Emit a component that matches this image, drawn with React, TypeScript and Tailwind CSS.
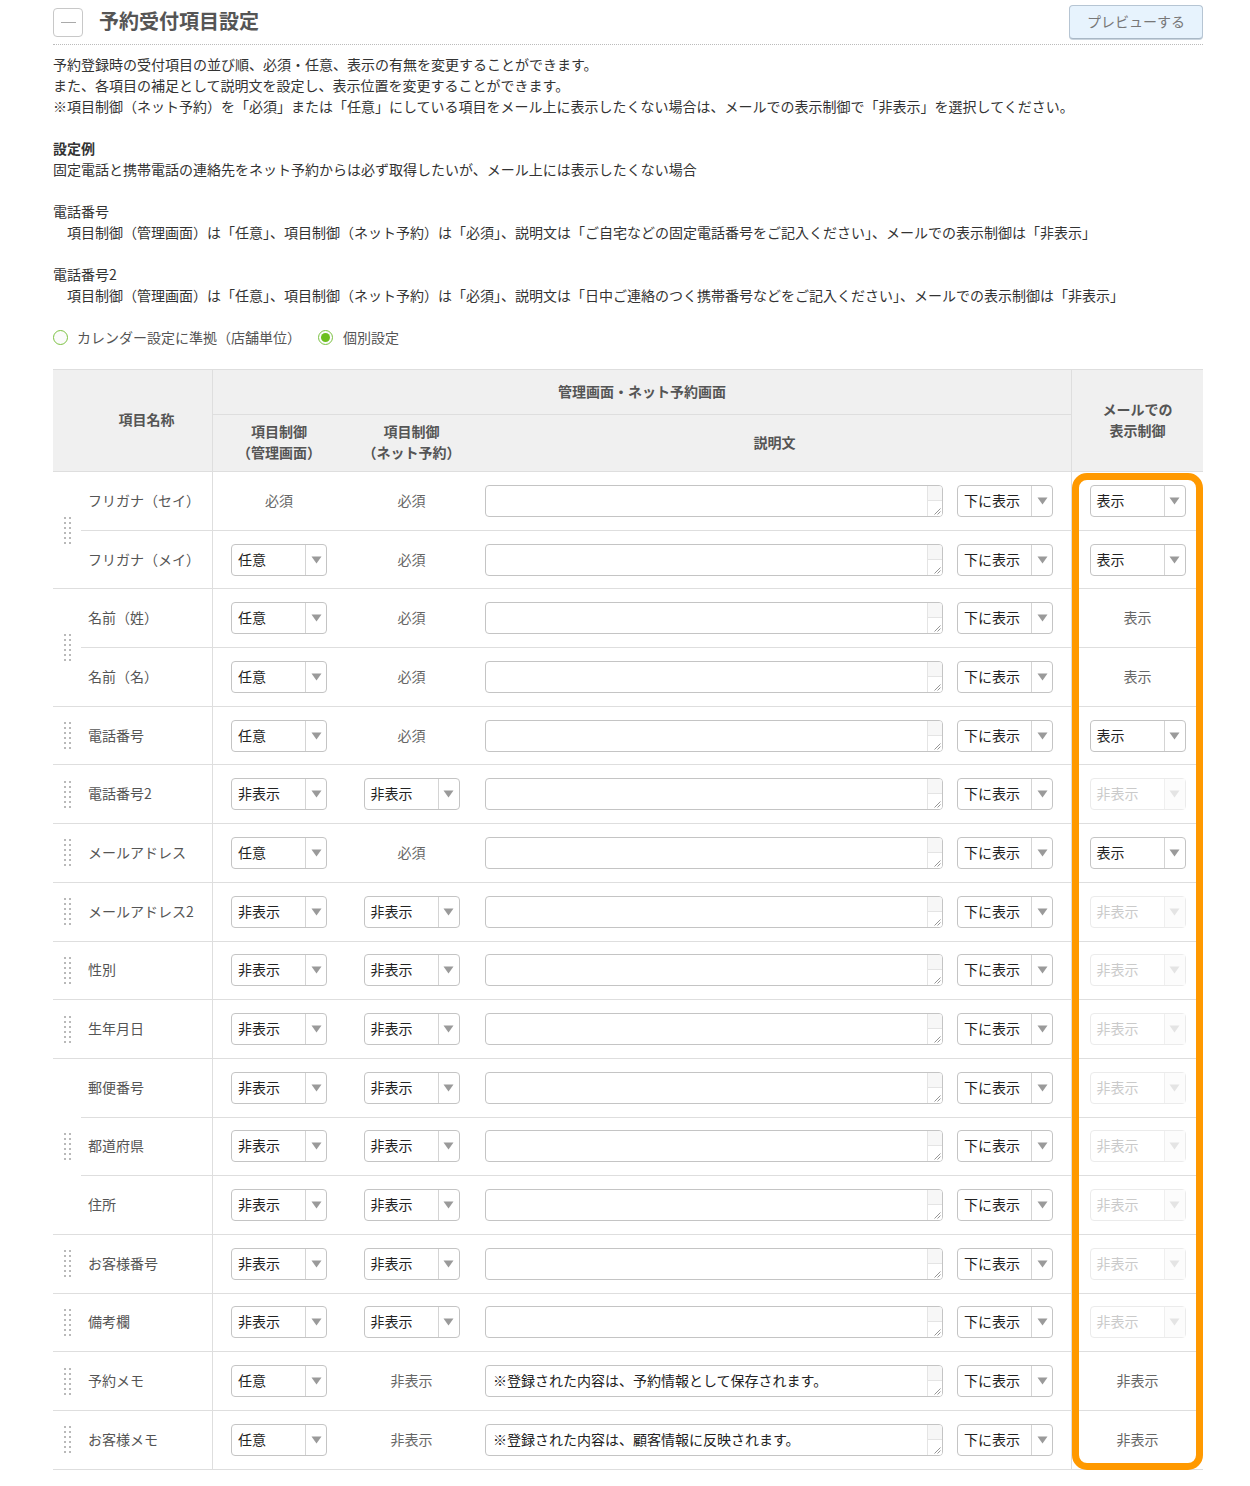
import React from "react";

type C = { t: "txt" | "sel" | "dis"; v: string };

type RowSpec = {
  name: string;
  admin: C;
  net: C;
  desc: string;
  mail: C;
};

const s = (v: string): C => ({ t: "sel", v });
const x = (v: string): C => ({ t: "txt", v });
const d = (v: string): C => ({ t: "dis", v });

const hidden = (name: string): RowSpec => ({
  name,
  admin: s("非表示"),
  net: s("非表示"),
  desc: "",
  mail: d("非表示"),
});

const groups: RowSpec[][] = [
  [
    { name: "フリガナ（セイ）", admin: x("必須"), net: x("必須"), desc: "", mail: s("表示") },
    { name: "フリガナ（メイ）", admin: s("任意"), net: x("必須"), desc: "", mail: s("表示") },
  ],
  [
    { name: "名前（姓）", admin: s("任意"), net: x("必須"), desc: "", mail: x("表示") },
    { name: "名前（名）", admin: s("任意"), net: x("必須"), desc: "", mail: x("表示") },
  ],
  [{ name: "電話番号", admin: s("任意"), net: x("必須"), desc: "", mail: s("表示") }],
  [hidden("電話番号2")],
  [{ name: "メールアドレス", admin: s("任意"), net: x("必須"), desc: "", mail: s("表示") }],
  [hidden("メールアドレス2")],
  [hidden("性別")],
  [hidden("生年月日")],
  [hidden("郵便番号"), hidden("都道府県"), hidden("住所")],
  [hidden("お客様番号")],
  [hidden("備考欄")],
  [
    {
      name: "予約メモ",
      admin: s("任意"),
      net: x("非表示"),
      desc: "※登録された内容は、予約情報として保存されます。",
      mail: x("非表示"),
    },
  ],
  [
    {
      name: "お客様メモ",
      admin: s("任意"),
      net: x("非表示"),
      desc: "※登録された内容は、顧客情報に反映されます。",
      mail: x("非表示"),
    },
  ],
];

function Select({ value, disabled }: { value: string; disabled?: boolean }) {
  return (
    <div
      className={
        disabled
          ? "flex h-[32px] w-[96px] rounded-[4px] border border-[#ebebeb] bg-white"
          : "flex h-[32px] w-[96px] rounded-[4px] border border-[#c4c4c4] bg-white"
      }
    >
      <div
        className={
          disabled
            ? "flex flex-1 items-center pb-[1px] pl-[6px] text-[14px] text-[#cacaca]"
            : "flex flex-1 items-center pb-[1px] pl-[6px] text-[14px] text-[#222]"
        }
      >
        {value}
      </div>
      <div
        className={
          disabled
            ? "flex w-[21px] items-center justify-center border-l border-[#efefef] bg-[#fcfcfc]"
            : "flex w-[21px] items-center justify-center border-l border-[#d4d4d4]"
        }
      >
        <svg width="11" height="8" viewBox="0 0 11 8">
          <path d="M0.5 0.5H10.5L5.5 7.5Z" fill={disabled ? "#e4e4e4" : "#9a9a9a"} />
        </svg>
      </div>
    </div>
  );
}

function TextArea({ value }: { value: string }) {
  return (
    <div className="flex h-[32px] w-[458px] overflow-hidden rounded-[4px] border border-[#c4c4c4] bg-white">
      <div className="flex-1 whitespace-nowrap pl-[7px] text-[14px] leading-[29px] text-[#222]">{value}</div>
      <div className="flex w-[15px] flex-col border-l border-[#e4e4e4]">
        <div className="flex-1 border-b border-[#e4e4e4] bg-[#f7f7f7]"></div>
        <div className="flex flex-1 items-end justify-end bg-white pb-[1px] pr-[1px]">
          <svg width="8" height="8" viewBox="0 0 8 8">
            <path d="M7.5 1.5L1.5 7.5M7.5 4.5L4.5 7.5" stroke="#8a8a8a" strokeWidth="0.9" fill="none" />
          </svg>
        </div>
      </div>
    </div>
  );
}

function CellView({ c }: { c: C }) {
  if (c.t === "sel") return <Select value={c.v} />;
  if (c.t === "dis") return <Select value={c.v} disabled />;
  return <span className="pb-[1px] text-[14px] text-[#666]">{c.v}</span>;
}

function Handle() {
  return (
    <div className="grid grid-cols-2 gap-x-[3px] gap-y-[3px]">
      {Array.from({ length: 12 }).map((_, i) => (
        <span key={i} className="block h-[2px] w-[2px] bg-[#b9b9b9]" />
      ))}
    </div>
  );
}

function Radio({ checked }: { checked?: boolean }) {
  return (
    <span className="flex h-[15px] w-[15px] items-center justify-center rounded-full border border-[#7cc242] bg-[#fbfbfb]">
      {checked ? <span className="block h-[9px] w-[9px] rounded-full bg-[#6cbf1e]" /> : null}
    </span>
  );
}

function Group({ rows }: { rows: RowSpec[] }) {
  return (
    <div className="flex border-b border-[#dedede]">
      <div className="flex w-[28px] items-center justify-center">
        <Handle />
      </div>
      <div className="flex w-[132px] flex-col border-r border-[#dedede]">
        {rows.map((r, i) => (
          <div
            key={i}
            className={
              i < rows.length - 1
                ? "flex h-[58.7px] items-center border-b border-[#dedede] pb-[1px] pl-[7px] text-[14px] text-[#555]"
                : "flex h-[57.7px] items-center pb-[1px] pl-[7px] text-[14px] text-[#555]"
            }
          >
            {r.name}
          </div>
        ))}
      </div>
      <div className="flex flex-1 flex-col">
        {rows.map((r, i) => (
          <div
            key={i}
            className={
              i < rows.length - 1
                ? "flex h-[58.7px] items-stretch border-b border-[#dedede]"
                : "flex h-[57.7px] items-stretch"
            }
          >
            <div className="flex w-[132px] items-center justify-center">
              <CellView c={r.admin} />
            </div>
            <div className="flex w-[133px] items-center justify-center">
              <CellView c={r.net} />
            </div>
            <div className="flex w-[593px] items-center gap-[14px] pl-[7px]">
              <TextArea value={r.desc} />
              <Select value="下に表示" />
            </div>
            <div className="flex w-[132px] items-center justify-center border-l border-[#dedede]">
              <CellView c={r.mail} />
            </div>
          </div>
        ))}
      </div>
    </div>
  );
}

export default function App() {
  return (
    <div className="min-h-[1486px] bg-white font-['Noto_Sans_CJK_JP','Noto_Sans',sans-serif] text-[#333]">
      <div className="ml-[53px] w-[1150px] pb-[16px]">
        {/* Title row */}
        <div className="flex h-[45px] items-center border-b border-dotted border-[#bbbbbb]">
          <div className="flex h-[29px] w-[30px] items-center justify-center rounded-[4px] border border-[#c8c8c8] bg-white">
            <span className="block h-[1px] w-[15px] bg-[#aaaaaa]" />
          </div>
          <h1 className="ml-[16px] pb-[2px] text-[20px] font-bold leading-[28px] text-[#555]">予約受付項目設定</h1>
          <div className="ml-auto flex h-[34px] w-[134px] items-center justify-center rounded-[4px] border border-[#b6c5d3] border-b-[#a9b8c6] bg-[#e7f3fd] pb-[2px] text-[14px] text-[#777] shadow-[0_1px_0_#c9d4de]">
            プレビューする
          </div>
        </div>

        {/* Description */}
        <div className="mt-[9px] text-[14px] leading-[21px] text-[#333]">
          <p>予約登録時の受付項目の並び順、必須・任意、表示の有無を変更することができます。</p>
          <p>また、各項目の補足として説明文を設定し、表示位置を変更することができます。</p>
          <p>
            {"※項目制御（ネット予約）を「必須」または「任意」にしている項目をメール上に表示したくない場合は、メールでの表示制御で「非表示」を選択してください。"}
          </p>
          <p className="h-[21px]"></p>
          <p className="font-bold">設定例</p>
          <p>固定電話と携帯電話の連絡先をネット予約からは必ず取得したいが、メール上には表示したくない場合</p>
          <p className="h-[21px]"></p>
          <p>電話番号</p>
          <p className="pl-[14px]">
            {"項目制御（管理画面）は「任意」、項目制御（ネット予約）は「必須」、説明文は「ご自宅などの固定電話番号をご記入ください」、メールでの表示制御は「非表示」"}
          </p>
          <p className="h-[21px]"></p>
          <p>電話番号2</p>
          <p className="pl-[14px]">
            {"項目制御（管理画面）は「任意」、項目制御（ネット予約）は「必須」、説明文は「日中ご連絡のつく携帯番号などをご記入ください」、メールでの表示制御は「非表示」"}
          </p>
          <p className="h-[21px]"></p>
          <div className="flex h-[21px] items-center text-[#555]">
            <Radio />
            <span className="ml-[9px] pb-[1px]">カレンダー設定に準拠（店舗単位）</span>
            <span className="ml-[17px]">
              <Radio checked />
            </span>
            <span className="ml-[10px] pb-[1px]">個別設定</span>
          </div>
        </div>

        {/* Table */}
        <div className="relative mt-[21px] border-t border-[#dedede]">
          {/* Header */}
          <div className="flex border-b border-[#dedede] bg-[#f0f0f0] text-[14px] font-bold leading-[21px] text-[#555]">
            <div className="flex h-[101px] w-[160px] items-center justify-center border-r border-[#dedede] pb-[2px] pl-[28px]">
              項目名称
            </div>
            <div className="flex w-[858px] flex-col">
              <div className="flex h-[45px] items-center justify-center border-b border-[#dedede] pb-[2px]">
                管理画面・ネット予約画面
              </div>
              <div className="flex h-[56px] pb-[2px]">
                <div className="flex w-[132px] flex-col items-center justify-center text-center">
                  <span>項目制御</span>
                  <span>（管理画面）</span>
                </div>
                <div className="flex w-[133px] flex-col items-center justify-center text-center">
                  <span>項目制御</span>
                  <span>（ネット予約）</span>
                </div>
                <div className="flex w-[593px] items-center justify-center">説明文</div>
              </div>
            </div>
            <div className="flex w-[132px] flex-col items-center justify-center border-l border-[#dedede] pb-[2px] text-center">
              <span>メールでの</span>
              <span>表示制御</span>
            </div>
          </div>

          {/* Body */}
          {groups.map((g, i) => (
            <Group key={i} rows={g} />
          ))}

          {/* Highlight */}
          <div className="pointer-events-none absolute bottom-0 right-0 top-[103px] w-[131px] rounded-[15px] border-[7px] border-[#ff9900]"></div>
        </div>
      </div>
    </div>
  );
}
